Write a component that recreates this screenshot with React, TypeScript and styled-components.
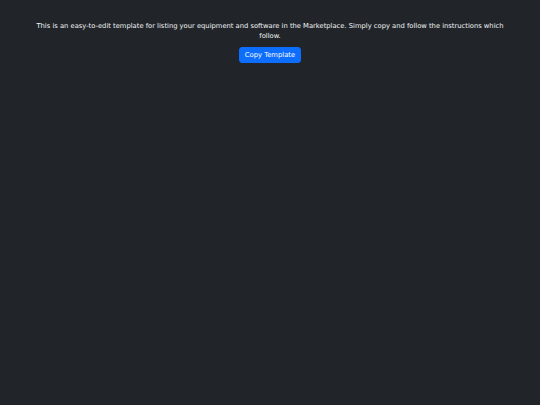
import React from "react";
import styled, { createGlobalStyle } from "styled-components";

const Global = createGlobalStyle`
  html, body { margin: 0; padding: 0; background: #212529; }
  body { font-family: "DejaVu Sans", sans-serif; color: #dee2e6; }
`;

const Page = styled.div`
  min-height: 405px;
  background: #212529;
  display: flex;
  flex-direction: column;
  align-items: center;
  padding: 20.5px 33px 0;
  box-sizing: border-box;
`;

const Intro = styled.p`
  margin: 0 0 6px;
  font-size: 6.75px;
  line-height: 10px;
  text-align: center;
  color: #f1f3f5;
`;

const Button = styled.button`
  background: #0d6efd;
  color: #fff;
  border: 0.5px solid #0d6efd;
  border-radius: 3px;
  font-family: "DejaVu Sans", sans-serif;
  font-size: 6.8px;
  line-height: 10px;
  padding: 2.5px 5px;
  height: 16px;
  cursor: pointer;
`;

export default function App() {
  return (
    <>
      <Global />
      <Page>
        <Intro>
          This is an easy-to-edit template for listing your equipment and software in the Marketplace. Simply copy and follow the instructions which follow.
        </Intro>
        <Button>Copy Template</Button>
      </Page>
    </>
  );
}
